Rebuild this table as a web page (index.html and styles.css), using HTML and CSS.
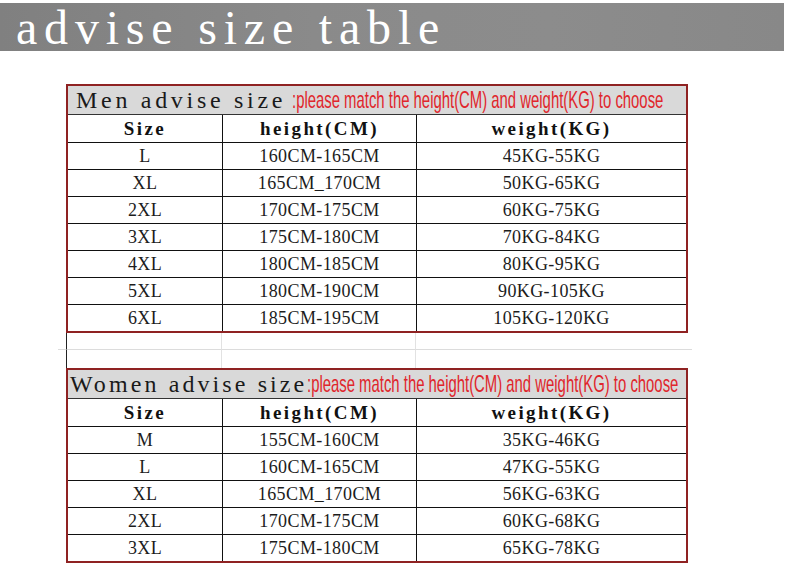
FILE: index.html
```html
<!DOCTYPE html>
<html>
<head>
<meta charset="utf-8">
<link rel="stylesheet" href="styles.css">
</head>
<body>
<div class="title-bar"><span class="title">advise size table</span></div>
<div class="sheet">
  <div class="tbl">
    <div class="head men"><span class="head-main">Men advise size</span><span class="head-note">:please match the height(CM) and weight(KG) to choose</span></div>
    <div class="row colhead"><div class="cell">Size</div><div class="cell">height(CM)</div><div class="cell">weight(KG)</div></div>
    <div class="row"><div class="cell">L</div><div class="cell">160CM-165CM</div><div class="cell">45KG-55KG</div></div>
    <div class="row"><div class="cell">XL</div><div class="cell">165CM_170CM</div><div class="cell">50KG-65KG</div></div>
    <div class="row"><div class="cell">2XL</div><div class="cell">170CM-175CM</div><div class="cell">60KG-75KG</div></div>
    <div class="row"><div class="cell">3XL</div><div class="cell">175CM-180CM</div><div class="cell">70KG-84KG</div></div>
    <div class="row"><div class="cell">4XL</div><div class="cell">180CM-185CM</div><div class="cell">80KG-95KG</div></div>
    <div class="row"><div class="cell">5XL</div><div class="cell">180CM-190CM</div><div class="cell">90KG-105KG</div></div>
    <div class="row"><div class="cell">6XL</div><div class="cell">185CM-195CM</div><div class="cell">105KG-120KG</div></div>
  </div>
  <div class="gap">
    <div class="gcell g0"></div><div class="gcell g1"></div><div class="gcell g2"></div><div class="gcell g3"></div><div class="gcell g4"></div>
    <div class="gcell g0"></div><div class="gcell g1"></div><div class="gcell g2"></div><div class="gcell g3"></div><div class="gcell g4"></div>
  </div>
  <div class="tbl">
    <div class="head women"><span class="head-main">Women advise size</span><span class="head-note">:please match the height(CM) and weight(KG) to choose</span></div>
    <div class="row colhead"><div class="cell">Size</div><div class="cell">height(CM)</div><div class="cell">weight(KG)</div></div>
    <div class="row"><div class="cell">M</div><div class="cell">155CM-160CM</div><div class="cell">35KG-46KG</div></div>
    <div class="row"><div class="cell">L</div><div class="cell">160CM-165CM</div><div class="cell">47KG-55KG</div></div>
    <div class="row"><div class="cell">XL</div><div class="cell">165CM_170CM</div><div class="cell">56KG-63KG</div></div>
    <div class="row"><div class="cell">2XL</div><div class="cell">170CM-175CM</div><div class="cell">60KG-68KG</div></div>
    <div class="row"><div class="cell">3XL</div><div class="cell">175CM-180CM</div><div class="cell">65KG-78KG</div></div>
  </div>
</div>
</body>
</html>
```
FILE: styles.css
```css
html, body {
  margin: 0;
  padding: 0;
  background: #ffffff;
}
body {
  width: 790px;
  height: 582px;
  overflow: hidden;
  font-family: "Liberation Serif", "Times New Roman", serif;
}
.title-bar {
  margin-top: 3px;
  width: 784px;
  height: 48px;
  background: linear-gradient(90deg, #808080 0%, #8a8a8a 40%, #8c8c8c 70%, #888888 100%);
  display: flex;
  align-items: flex-end;
}
.title {
  display: block;
  margin-left: 16px;
  margin-bottom: -1px;
  color: #ffffff;
  font-size: 48px;
  line-height: 48px;
  letter-spacing: 6.8px;
  white-space: nowrap;
}
.sheet {
  margin-top: 33px;
  margin-left: 58px;
  width: 634px;
}
.tbl {
  margin-left: 8px;
  width: 622px;
  border: 2px solid #8f2222;
  box-sizing: border-box;
}
.head {
  height: 28px;
  background: #d9d9d9;
  display: flex;
  align-items: center;
  white-space: nowrap;
  color: #1a1a1a;
}
.head.men { padding-left: 8px; }
.head.women { padding-left: 2px; }
.head-main {
  display: inline-block;
  font-size: 24px;
  line-height: 28px;
  letter-spacing: 3.1px;
}
.men .head-main {
  letter-spacing: 3.7px;
}
.head-note {
  display: inline-block;
  font-family: "Liberation Sans", Arial, sans-serif;
  font-size: 24px;
  line-height: 28px;
  color: #e0262c;
  transform: scaleX(0.62);
  transform-origin: left center;
}
.men .head-note {
  margin-left: 6px;
}
.row {
  display: grid;
  grid-template-columns: 154px 194px 1fr;
  height: 26px;
  border-top: 1px solid #111111;
}
.row.colhead {
  height: 27px;
  border-top-color: #333333;
}
.cell {
  display: flex;
  align-items: center;
  justify-content: center;
  font-size: 18px;
  letter-spacing: 0.4px;
  color: #1c1c1c;
  border-left: 1px solid #111111;
  white-space: nowrap;
}
.cell:first-child { border-left: none; }
.colhead .cell {
  font-size: 19px;
  font-weight: bold;
  letter-spacing: 2.4px;
  color: #111111;
}
.gap {
  display: grid;
  grid-template-columns: 8px 155px 194px 270px 7px;
  grid-template-rows: 17px 18px;
  height: 35px;
}
.gcell {
  border-bottom: 1px solid #dcdcdc;
  box-sizing: border-box;
}
.gcell.g1 { border-left: 1px solid #222222; }
.gcell.g2, .gcell.g3 { border-left: 1px solid #e2e2e2; }
.gcell.g4 { border-left: none; }
.gap .gcell:nth-child(n+6) { border-bottom: none; }
```
